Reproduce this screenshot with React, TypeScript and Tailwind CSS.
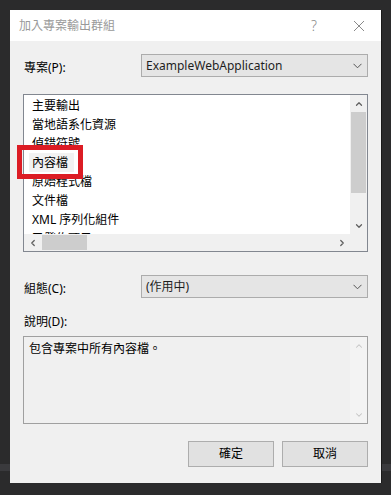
import { ChevronDown, ChevronUp, ChevronLeft, ChevronRight } from "lucide-react";

const font = { fontFamily: '"Noto Sans", "Noto Sans CJK TC", sans-serif' };

function Combo({ value }: { value: string }) {
    return (
        <div className="w-[227px] h-[23px] bg-[#e5e5e5] border border-[#acacac] flex items-center justify-between pl-[4px] pr-[5px]">
            <span className="text-[12px] text-[#1e1e1e] leading-none">{value}</span>
            <svg width="9" height="6" viewBox="0 0 9 6" className="text-[#555555]">
                <path d="M0.5 0.8 L4.5 4.8 L8.5 0.8" stroke="currentColor" strokeWidth="1" fill="none" />
            </svg>
        </div>
    );
}

const items = ["主要輸出", "當地語系化資源", "偵錯符號", "內容檔", "原始程式檔", "文件檔", "XML 序列化組件", "已發佈項目"];

export default function App() {
    return (
        <div className="w-[391px] h-[495px] bg-[#2b2b2c] relative overflow-hidden pt-[10px] pl-[10px]" style={font}>
            <div className="absolute left-0 right-0 top-[464px] h-[7px] bg-[#3a3a3d]" />

            <div className="relative w-[372px] h-[473px] flex flex-col border-r border-[#1a1a1a]">
                {/* title bar */}
                <div className="h-[31px] bg-white flex items-center pl-[9px] pr-[16px]">
                    <span className="text-[12px] text-[#999999] flex-1">加入專案輸出群組</span>
                    <span className="text-[14px] text-[#8a8a8a] font-light mr-[36px]">?</span>
                    <svg width="12" height="12" viewBox="0 0 12 12" className="text-[#8a8a8a]">
                        <path d="M1 1 L11 11 M11 1 L1 11" stroke="currentColor" strokeWidth="1" fill="none" />
                    </svg>
                </div>

                {/* body */}
                <div className="flex-1 bg-[#f0f0f0] px-[13px] pt-[13px] flex flex-col">
                    <div className="flex items-center justify-between">
                        <span className="text-[12px] text-black pl-[1px] pt-[4px]">專案(P):</span>
                        <Combo value="ExampleWebApplication" />
                    </div>

                    {/* list box */}
                    <div className="relative mt-[17px] h-[158px] border border-[#828790] bg-white flex flex-col">
                        <div className="flex flex-1 min-h-0">
                            <div className="flex-1 overflow-hidden pl-[8px] pt-[1px]">
                                {items.map((it) => (
                                    <div key={it} className={`h-[19px] flex items-center text-[12px] text-black ${it === "內容檔" ? "bg-[#f2f2f2] w-fit pr-[6px] -ml-[3px] pl-[3px]" : ""}`}>
                                        {it}
                                    </div>
                                ))}
                            </div>
                            <div className="w-[17px] bg-[#f0f0f0] flex flex-col items-center">
                                <div className="h-[17px] flex items-center justify-center">
                                    <ChevronUp size={10} strokeWidth={3} className="text-[#606060]" />
                                </div>
                                <div className="w-[15px] h-[81px] bg-[#cdcdcd]" />
                                <div className="flex-1" />
                                <div className="h-[17px] flex items-center justify-center">
                                    <ChevronDown size={10} strokeWidth={3} className="text-[#606060]" />
                                </div>
                            </div>
                        </div>
                        <div className="h-[17px] flex bg-[#f0f0f0]">
                            <div className="flex-1 flex items-center">
                                <div className="w-[17px] flex justify-center">
                                    <ChevronLeft size={10} strokeWidth={3} className="text-[#606060]" />
                                </div>
                                <div className="w-[45px] h-[15px] bg-[#cdcdcd] ml-[1px]" />
                                <div className="flex-1" />
                                <div className="w-[17px] flex justify-center">
                                    <ChevronRight size={10} strokeWidth={3} className="text-[#606060]" />
                                </div>
                            </div>
                            <div className="w-[17px]" />
                        </div>

                        {/* highlight box */}
                        <div className="absolute left-[-7px] top-[50px] w-[66px] h-[34px] border-[5px] border-[#dc1c24]" />
                    </div>

                    <div className="flex items-center justify-between mt-[23px]">
                        <span className="text-[12px] text-black pl-[1px] pt-[4px]">組態(C):</span>
                        <Combo value="(作用中)" />
                    </div>

                    <span className="text-[12px] text-black pl-[1px] mt-[16px] leading-[16px]">說明(D):</span>

                    <div className="mt-[6px] h-[88px] border border-[#a0a0a0] bg-[#f0f0f0] flex">
                        <div className="flex-1 pl-[5px] pt-[4px] text-[12px] text-black leading-[16px]">包含專案中所有內容檔。</div>
                        <div className="w-[17px] bg-[#f3f3f3] flex flex-col justify-between items-center">
                            <div className="h-[17px] flex items-center justify-center">
                                <ChevronUp size={10} strokeWidth={2.5} className="text-[#c4c4c4]" />
                            </div>
                            <div className="h-[17px] flex items-center justify-center">
                                <ChevronDown size={10} strokeWidth={2.5} className="text-[#c4c4c4]" />
                            </div>
                        </div>
                    </div>

                    <div className="flex justify-end gap-[8px] mt-[17px]">
                        <button className="w-[86px] h-[26px] bg-[#e1e1e1] border border-[#adadad] text-[12px] text-black">確定</button>
                        <button className="w-[86px] h-[26px] bg-[#e1e1e1] border border-[#adadad] text-[12px] text-black">取消</button>
                    </div>
                </div>
            </div>
        </div>
    );
}
